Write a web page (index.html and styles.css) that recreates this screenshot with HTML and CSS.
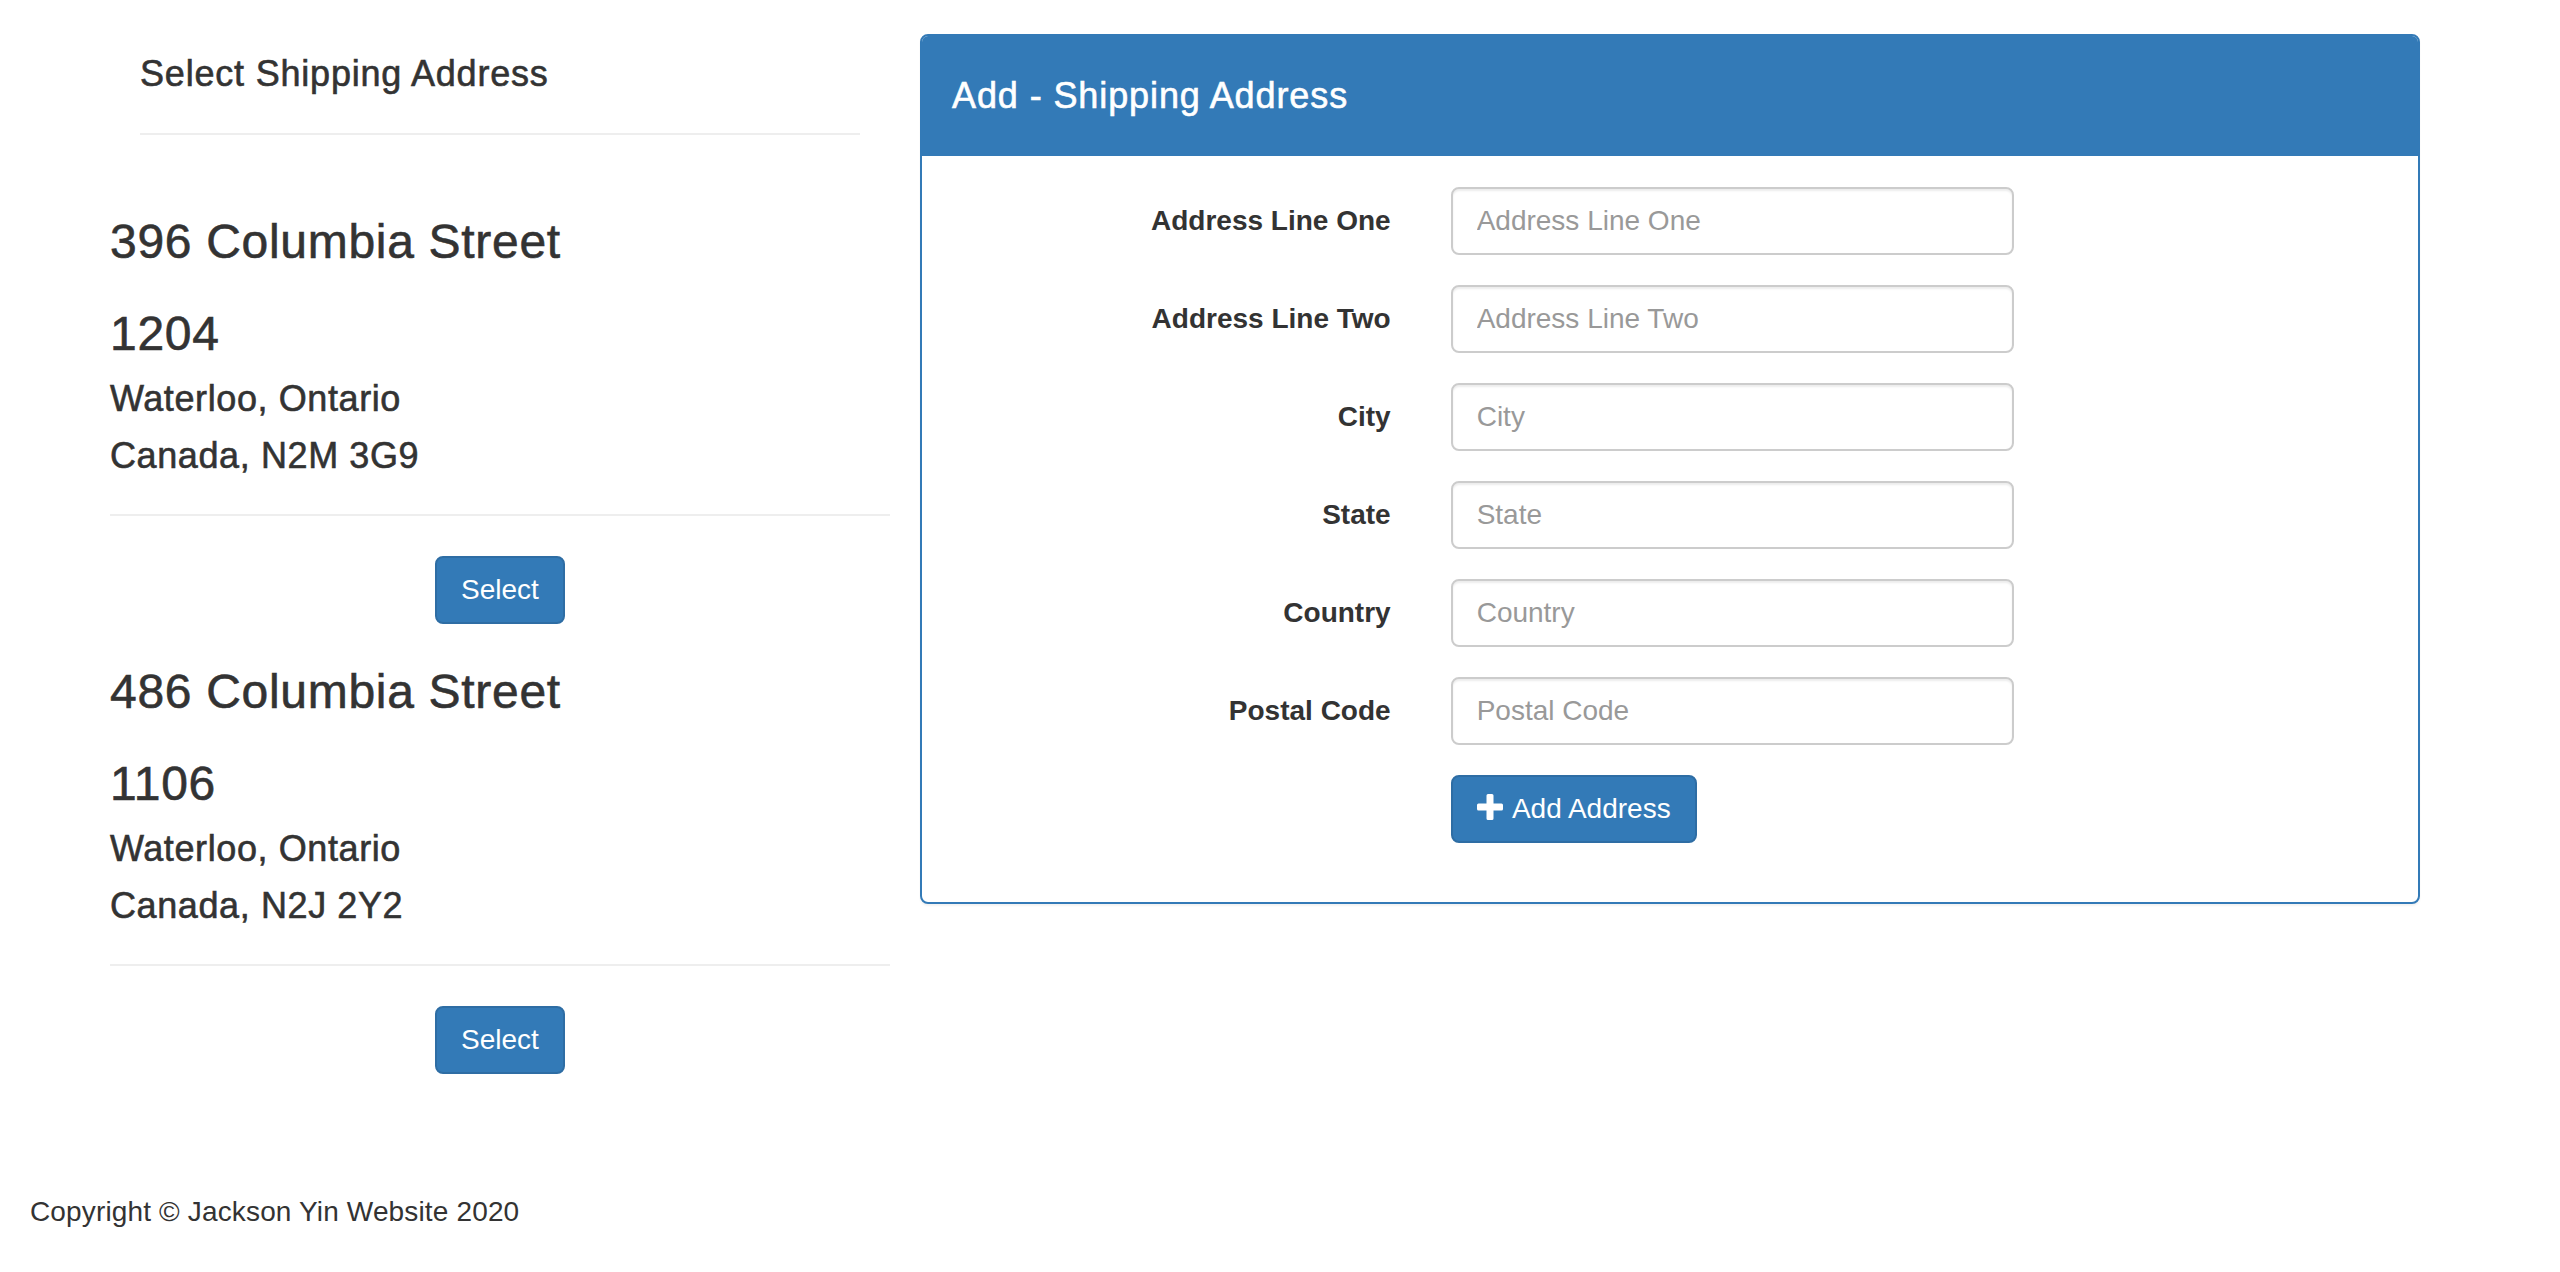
FILE: index.html
```html
<!DOCTYPE html>
<html lang="en">
<head>
<meta charset="utf-8">
<title>Shipping Address</title>
<link rel="stylesheet" href="styles.css">
</head>
<body>
<div class="container">
  <div class="row">
    <div class="col-left">
      <h4 class="select-title">Select Shipping Address</h4>
      <hr class="divider">
      <div class="address-list">
        <div class="address">
          <h3 class="street">396 Columbia Street</h3>
          <h3 class="unit">1204</h3>
          <h4 class="city">Waterloo, Ontario</h4>
          <h4 class="country">Canada, N2M 3G9</h4>
          <hr class="address-rule">
          <div class="address-actions"><button class="btn" type="button">Select</button></div>
        </div>
        <div class="address">
          <h3 class="street">486 Columbia Street</h3>
          <h3 class="unit">1106</h3>
          <h4 class="city">Waterloo, Ontario</h4>
          <h4 class="country">Canada, N2J 2Y2</h4>
          <hr class="address-rule">
          <div class="address-actions"><button class="btn" type="button">Select</button></div>
        </div>
      </div>
    </div>
    <div class="col-right">
      <div class="panel">
        <div class="panel-heading"><h4 class="panel-title">Add - Shipping Address</h4></div>
        <div class="panel-body">
          <form class="form">
            <div class="form-group">
              <label class="control-label">Address Line One</label>
              <div class="control"><input class="form-control" type="text" placeholder="Address Line One"></div>
            </div>
            <div class="form-group">
              <label class="control-label">Address Line Two</label>
              <div class="control"><input class="form-control" type="text" placeholder="Address Line Two"></div>
            </div>
            <div class="form-group">
              <label class="control-label">City</label>
              <div class="control"><input class="form-control" type="text" placeholder="City"></div>
            </div>
            <div class="form-group">
              <label class="control-label">State</label>
              <div class="control"><input class="form-control" type="text" placeholder="State"></div>
            </div>
            <div class="form-group">
              <label class="control-label">Country</label>
              <div class="control"><input class="form-control" type="text" placeholder="Country"></div>
            </div>
            <div class="form-group">
              <label class="control-label">Postal Code</label>
              <div class="control"><input class="form-control" type="text" placeholder="Postal Code"></div>
            </div>
            <div class="form-group">
              <div class="control offset">
                <button class="btn" type="button"><svg class="icon-plus" width="26" height="26" viewBox="0 0 26 26" aria-hidden="true"><path d="M9.5 1.5Q9.5 0 11 0h4q1.5 0 1.5 1.5V9.5h8Q26 9.5 26 11v4q0 1.5-1.5 1.5h-8v8Q16.5 26 15 26h-4q-1.5 0-1.5-1.5v-8h-8Q0 16.5 0 15v-4q0-1.5 1.5-1.5h8z" fill="#fff"/></svg> Add Address</button>
              </div>
            </div>
          </form>
        </div>
      </div>
    </div>
  </div>
</div>
<footer class="footer">Copyright © Jackson Yin Website 2020</footer>
</body>
</html>
```

FILE: styles.css
```css
* {
  box-sizing: border-box;
}

html, body {
  margin: 0;
  padding: 0;
  background: #fff;
}

body {
  font-family: "Liberation Sans", Helvetica, Arial, sans-serif;
  font-size: 28px;
  line-height: 40px;
  color: #333;
}

.container {
  width: 2340px;
  margin: 0 auto;
  padding: 34px 30px 0;
}

.row {
  display: flex;
  align-items: flex-start;
  margin: 0 -30px;
}

.col-left {
  width: 780px;
  padding: 0 30px;
  display: flex;
  flex-direction: column;
}

.col-right {
  width: 1560px;
  padding: 0 30px;
}

.select-title,
.street,
.unit,
.city,
.country,
.panel-title {
  font-weight: 500;
  -webkit-text-stroke: 0.6px currentColor;
}

.select-title {
  margin: 20px 0 0;
  font-size: 36px;
  line-height: 40px;
  letter-spacing: 0.8px;
}

.divider,
.address-rule {
  height: 2px;
  border: 0;
  background: #eee;
  margin: 0;
}

.divider {
  margin-top: 39px;
}

.address-list {
  margin: 39px -30px 0;
  display: flex;
  flex-direction: column;
}

.address {
  display: flex;
  flex-direction: column;
}

.street,
.unit {
  margin: 0;
  font-size: 48px;
  line-height: 53px;
  letter-spacing: 0.7px;
}

.street {
  margin-top: 41px;
}

.unit {
  margin-top: 39px;
}

.city,
.country {
  margin: 0;
  font-size: 36px;
  line-height: 40px;
  letter-spacing: 0.6px;
}

.city {
  margin-top: 19px;
}

.country {
  margin-top: 17px;
}

.address-rule {
  margin-top: 38px;
}

.address-actions {
  margin-top: 40px;
  display: flex;
  justify-content: center;
}

.btn {
  display: inline-block;
  margin: 0;
  padding: 12px 24px;
  font-family: inherit;
  font-size: 28px;
  line-height: 40px;
  font-weight: 400;
  color: #fff;
  background: #337ab7;
  border: 2px solid #2e6da4;
  border-radius: 8px;
  white-space: nowrap;
  cursor: pointer;
}

.icon-plus {
  display: inline-block;
  vertical-align: -2px;
  margin-right: 3px;
}

.panel {
  background: #fff;
  border: 2px solid #337ab7;
  border-radius: 8px;
  box-shadow: 0 2px 2px rgba(0, 0, 0, 0.05);
}

.panel-heading {
  background: #337ab7;
  color: #fff;
  padding: 20px 30px;
  border-radius: 6px 6px 0 0;
}

.panel-title {
  margin: 20px 0;
  font-size: 36px;
  line-height: 40px;
  letter-spacing: 0.9px;
}

.panel-body {
  padding: 31px 30px 29px;
}

.form {
  margin: 0 -30px;
}

.form-group {
  display: flex;
  margin-bottom: 30px;
}

.control-label {
  width: 33.3333%;
  padding: 14px 30px 0;
  text-align: right;
  font-weight: 700;
  line-height: 40px;
}

.control {
  width: 41.6667%;
  padding: 0 30px;
}

.offset {
  margin-left: 33.3333%;
}

.form-control {
  display: block;
  width: 100%;
  height: 68px;
  margin: 0;
  padding: 12px 24px;
  font-family: inherit;
  font-size: 28px;
  line-height: 40px;
  color: #555;
  background: #fff;
  border: 2px solid #ccc;
  border-radius: 8px;
  box-shadow: inset 0 2px 2px rgba(0, 0, 0, 0.075);
}

.form-control::placeholder {
  color: #999;
  opacity: 1;
}

.footer {
  margin-top: 118px;
  padding-left: 30px;
  font-size: 28px;
  line-height: 40px;
  letter-spacing: 0.15px;
  color: #333;
}
```
